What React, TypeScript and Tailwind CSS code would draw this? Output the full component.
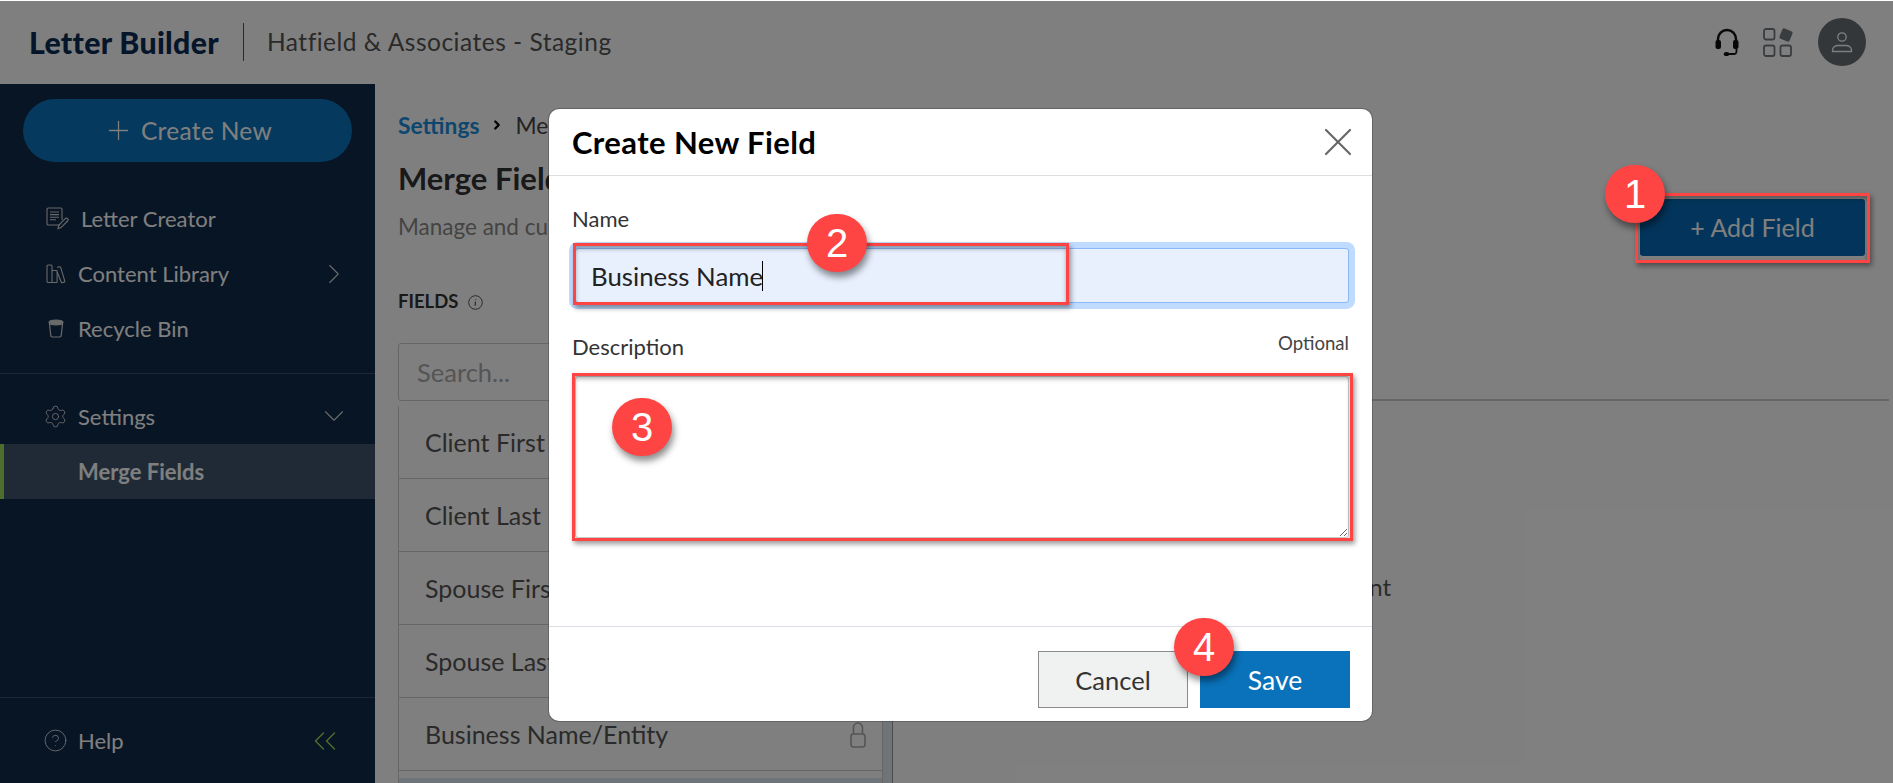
import React from "react";
import { ChevronDown, ChevronRight, ChevronsLeft, CircleHelp, Plus, Settings, X } from "lucide-react";

const FONT = "font-['Lato','Open_Sans',sans-serif]";

function DocIcon() {
  return (
    <svg width="23" height="23" viewBox="0 0 23 23" fill="none" stroke="currentColor" strokeWidth="1.1" className="text-[#d4d4d4]">
      <path d="M14 18H2.2A1.2 1.2 0 0 1 1 16.8V2.2A1.2 1.2 0 0 1 2.2 1h12.6A1.2 1.2 0 0 1 16 2.2V13" />
      <path d="M4 5h9M4 7.6h9M4 10.2h9M4 12.8h6" />
      <path d="M12 21.6l.7-3.3 6.6-6.6a1.5 1.5 0 0 1 2.3 2.3L15 20.6z" />
    </svg>
  );
}
function BooksIcon() {
  return (
    <svg width="20" height="20" viewBox="0 0 20 20" fill="none" stroke="currentColor" strokeWidth="1.1" className="text-[#d4d4d4]">
      <rect x="1" y="1" width="5" height="17.5" rx="1" />
      <path d="M6 6.5h4.5a.6.6 0 0 1 .6.6v10.8a.6.6 0 0 1-.6.6H6" />
      <path d="M11.2 3.4l2.6-.7a.7.7 0 0 1 .8.5l4.2 14a.7.7 0 0 1-.5.9l-2.2.6a.7.7 0 0 1-.8-.5L11.2 8" />
    </svg>
  );
}
function CupIcon() {
  return (
    <svg width="16" height="19" viewBox="0 0 16 19" fill="none" stroke="currentColor" strokeWidth="1.2" className="text-[#d4d4d4]">
      <path d="M1 3.5c0-1.5 3-2.5 7-2.5s7 1 7 2.5-3 2.300-7 2.300-7-.8-7-2.300z" fill="currentColor" />
      <path d="M1.500 5l1.300 11.700A1.500 1.500 0 0 0 4.300 18h7.400a1.500 1.500 0 0 0 1.500-1.300L14.500 5" />
    </svg>
  );
}
function HeadsetIcon() {
  return (
    <svg width="24" height="29" viewBox="0 0 24 29" fill="none" className="text-[#111]">
      <path d="M3 14V11a9 9 0 0 1 18 0v3" stroke="currentColor" strokeWidth="2.400" />
      <rect x="0.500" y="12" width="5.500" height="9" rx="2" fill="currentColor" />
      <rect x="18" y="12" width="5.500" height="9" rx="2" fill="currentColor" />
      <path d="M21.500 21v2.500a2.500 2.500 0 0 1-2.500 2.500h-6" stroke="currentColor" strokeWidth="1.800" />
      <ellipse cx="11.500" cy="26" rx="2.800" ry="2" fill="currentColor" />
    </svg>
  );
}
function AppsIcon() {
  return (
    <svg width="30" height="30" viewBox="0 0 30 30" fill="none" stroke="#747b80" strokeWidth="1.800">
      <rect x="1" y="2" width="10.500" height="10.500" rx="2" />
      <rect x="1" y="18.500" width="10.500" height="10.500" rx="2" />
      <rect x="17.500" y="18.500" width="10.500" height="10.500" rx="2" />
      <rect x="17.500" y="2.500" width="11" height="11" rx="2" fill="#747b80" stroke="none" transform="rotate(22 23 8)" />
    </svg>
  );
}
function UserIcon() {
  return (
    <svg width="22" height="22" viewBox="0 0 22 22" fill="none" stroke="white" strokeWidth="1.300">
      <circle cx="11" cy="6" r="4.200" />
      <path d="M1.500 20.500v-1.300c0-2.700 2.700-4.700 5.500-4.700h8c2.800 0 5.500 2 5.500 4.700v1.300z" />
    </svg>
  );
}
function LockIcon() {
  return (
    <svg width="16" height="26" viewBox="0 0 16 26" fill="none" stroke="#aaaaaa" strokeWidth="1.600">
      <path d="M3.500 12V5.500a4.500 4.500 0 0 1 9 0V12" />
      <rect x="1" y="12" width="14" height="13" rx="2.500" />
    </svg>
  );
}
function InfoIcon() {
  return (
    <svg width="15" height="15" viewBox="0 0 15 15" fill="none" stroke="#555" strokeWidth="1">
      <circle cx="7.500" cy="7.500" r="6.800" />
      <path d="M7.500 6.500l-.4 4.300M7.800 4v.8" strokeWidth="1.200" />
    </svg>
  );
}

function NavRow({ icon, label, ml, right }: { icon: React.ReactNode; label: string; ml: string; right?: React.ReactNode }) {
  return (
    <div className="flex h-[55px] items-center pl-[46px] text-[22px] text-white">
      <div className="w-[24px] shrink-0">{icon}</div>
      <span className={ml}>{label}</span>
      {right}
    </div>
  );
}

function Badge({ n, pos }: { n: string; pos: string }) {
  return (
    <div
      className={`absolute flex h-[58px] w-[60px] items-center justify-center rounded-full bg-[#ff4444] font-['Liberation_Sans',sans-serif] text-[40px] leading-none text-white shadow-[2px_5px_7px_rgba(0,0,0,0.45)] ${pos}`}
    >
      {n}
    </div>
  );
}

function RedBox({ pos }: { pos: string }) {
  return <div className={`pointer-events-none absolute border-[3px] border-[#ff4444] shadow-[2px_3px_5px_rgba(0,0,0,0.4),inset_0_3px_4px_rgba(0,0,0,0.3)] ${pos}`} />;
}

const ROWS = ["Client First Name", "Client Last Name", "Spouse First Name", "Spouse Last Name", "Business Name/Entity"];

export default function App() {
  return (
    <div className={`relative flex h-[783px] w-full flex-col overflow-hidden bg-white ${FONT}`}>
      <header className="flex h-[84px] shrink-0 items-center bg-white pl-[29px] pr-[27px]">
        <span className="w-[191px] shrink-0 whitespace-nowrap pt-[1px] text-[30.300px] font-black tracking-[0.3px] text-[#0a2d55]">Letter Builder</span>
        <div className="ml-[23px] h-[38px] w-px bg-[#555]" />
        <span className="ml-[23px] text-[24.500px] tracking-[0.5px] text-[#555]">Hatfield &amp; Associates - Staging</span>
        <div className="ml-auto flex items-center">
          <HeadsetIcon />
          <div className="ml-[24px]"><AppsIcon /></div>
          <div className="ml-[25px] flex h-[48px] w-[48px] items-center justify-center rounded-full bg-[#666e74]">
            <UserIcon />
          </div>
        </div>
      </header>

      <div className="flex min-h-0 flex-1">
        <aside className="flex w-[375px] shrink-0 flex-col bg-[#102a4a]">
          <div className="mx-[23px] mt-[15px] flex h-[63px] items-center justify-center rounded-full bg-[#0a72ba] text-[24.500px] tracking-[0.3px] text-white">
            <Plus size={31} strokeWidth={1} className="mr-[7px]" />
            <span className="pt-[2px]">Create New</span>
          </div>
          <div className="mt-[29px]">
            <NavRow icon={<DocIcon />} label="Letter Creator" ml="ml-[11px]" />
            <NavRow icon={<BooksIcon />} label="Content Library" ml="ml-[8px]" right={<ChevronRight size={34} strokeWidth={0.800} className="ml-auto mr-[24px] text-[#d4d4d4]" />} />
            <NavRow icon={<div className="pl-[2px]"><CupIcon /></div>} label="Recycle Bin" ml="ml-[8px]" />
          </div>
          <div className="mt-[17px] h-px bg-[#3d5069]" />
          <div className="mb-[1px] mt-[15px] flex h-[54px] items-center pl-[43px] text-[22px] text-white">
            <Settings size={25} strokeWidth={0.900} className="text-[#d4d4d4]" />
            <span className="ml-[10px]">Settings</span>
            <ChevronDown size={34} strokeWidth={0.800} className="ml-auto mr-[24px] text-[#d4d4d4]" />
          </div>
          <div className="flex h-[55px] items-center border-l-[4px] border-[#9cdc5c] bg-[#40546c] pl-[74px] text-[22px] font-bold text-white">
            Merge Fields
          </div>
          <div className="mt-auto flex h-[86px] items-center border-t border-[#3d5069] pl-[43px] text-[22px] text-white">
            <CircleHelp size={25} strokeWidth={0.900} className="text-[#d4d4d4]" />
            <span className="ml-[10px]">Help</span>
            <ChevronsLeft size={38} strokeWidth={0.900} className="ml-auto mr-[31px] text-[#9cdc5c]" />
          </div>
        </aside>

        <main className="flex min-w-0 flex-1 flex-col">
          <div className="flex h-[259px] shrink-0 justify-between pl-[23px]">
            <div>
              <div className="mt-[29px] flex h-[24px] items-center whitespace-nowrap text-[22.800px] leading-none">
                <span className="font-bold text-[#1a8fdc]">Settings</span>
                <ChevronRight size={14} strokeWidth={4} className="ml-[11px] mr-[11px] shrink-0 text-black" />
                <span className="text-[#444]">Merge Fields</span>
              </div>
              <h1 className="mt-[23px] h-[36px] whitespace-nowrap text-[31px] font-bold leading-[36px] text-[#333]">Merge Fields</h1>
              <p className="mt-[19px] h-[24px] whitespace-nowrap text-[22.500px] leading-[24px] text-[#888]">Manage and customize</p>
              <div className="mt-[53px] flex h-[20px] items-center text-[18.500px] font-bold text-[#333]">
                FIELDS
                <span className="ml-[10px]"><InfoIcon /></span>
              </div>
            </div>
            <button className="mr-[28px] mt-[115px] h-[57px] w-[225px] rounded-[3px] bg-[#076ab8] text-[25px] text-white">+ Add Field</button>
          </div>

          <div className="flex min-h-0 flex-1">
            <div className="ml-[23px] flex w-[485px] shrink-0 flex-col">
              <div className="flex h-[58px] shrink-0 items-center rounded-[3px] border border-[#ccc] pl-[18px] text-[25.500px] text-[#aaa]">Search...</div>
              <div className="mt-[5px] flex-1 border-x border-[#ccc]">
                {ROWS.map((r) => (
                  <div key={r} className="flex h-[73px] items-center justify-between border-b border-[#ccc] pl-[26px] pr-[16px] pt-[2px] text-[25px] text-[#555]">
                    {r}
                    {r.startsWith("Business") && <LockIcon />}
                  </div>
                ))}
                <div className="mt-[7px] h-[20px] bg-[#dee9f2]" />
              </div>
            </div>
            <div className="mt-[63px] w-[9px] shrink-0 bg-[#dee9f2]" />
            <div className="flex min-w-0 flex-1 flex-col pr-[4px]">
              <div className="h-[58px] shrink-0 border-b-2 border-[#ccc]" />
              <div className="flex-1 border-l border-[#999]">
                <p className="mt-[171px] w-[498px] text-right text-[24px] leading-[30px] text-[#555]">Client</p>
              </div>
            </div>
          </div>
        </main>
      </div>

      {/* dialog backdrop */}
      <div className="absolute inset-x-0 bottom-0 top-px bg-black/50" />

      {/* dialog */}
      <div className="absolute left-[549px] top-[109px] flex h-[612px] w-[823px] flex-col rounded-[10px] bg-white shadow-[0_0_0_1px_rgba(0,0,0,0.2)]">
        <div className="flex h-[67px] shrink-0 items-center justify-between border-b border-[#dedede] pl-[23px] pr-[10px]">
          <h2 className="text-[31px] font-bold tracking-[0.4px] text-black">Create New Field</h2>
          <X size={48} strokeWidth={1.100} className="text-[#666]" />
        </div>
        <div className="flex flex-1 flex-col pl-[23px] pr-[23px]">
          <label className="mt-[31px] h-[24px] text-[22px] leading-[24px] text-[#333]">Name</label>
          <div className="relative ml-[3px] mt-[17px]">
            <input
              readOnly
              value="Business Name"
              className="h-[55px] w-full rounded-[3px] border border-[#8ab8f8] bg-[#e8f0fe] pl-[15px] text-[25.800px] text-[#222] shadow-[0_0_0_6px_#bfdbff] outline-none"
            />
            <span className="absolute left-[187px] top-[13px] h-[30px] w-px bg-black" />
          </div>
          <div className="mt-[32px] flex items-start justify-between">
            <label className="h-[24px] text-[22px] leading-[24px] text-[#333]">Description</label>
            <span className="-mt-[4px] text-[18.600px] leading-[24px] text-[#444]">Optional</span>
          </div>
          <textarea
            readOnly
            className="ml-[3px] mt-[17px] block h-[162px] w-[774px] rounded-[3px] border border-[#ccc] bg-white outline-none"
          />
        </div>
        <div className="flex h-[95px] shrink-0 justify-end gap-[12px] border-t border-[#dcdce6] pr-[22px] pt-[24px]">
          <button className="h-[57px] w-[150px] border border-[#8a8a8a] bg-[#f0f1f1] pt-[2px] text-[25.500px] text-[#333]">Cancel</button>
          <button className="h-[57px] w-[150px] bg-[#0a72ba] pt-[2px] text-[26.500px] text-white">Save</button>
        </div>
      </div>

      {/* tutorial annotations */}
      <RedBox pos="left-[1635px] top-[193px] h-[70px] w-[235px]" />
      <RedBox pos="left-[573px] top-[243px] h-[62px] w-[496px]" />
      <RedBox pos="left-[572px] top-[373px] h-[168px] w-[781px]" />
      <Badge n="1" pos="left-[1605px] top-[165px]" />
      <Badge n="2" pos="left-[807px] top-[214px]" />
      <Badge n="3" pos="left-[612px] top-[398px]" />
      <Badge n="4" pos="left-[1174px] top-[618px]" />
    </div>
  );
}
